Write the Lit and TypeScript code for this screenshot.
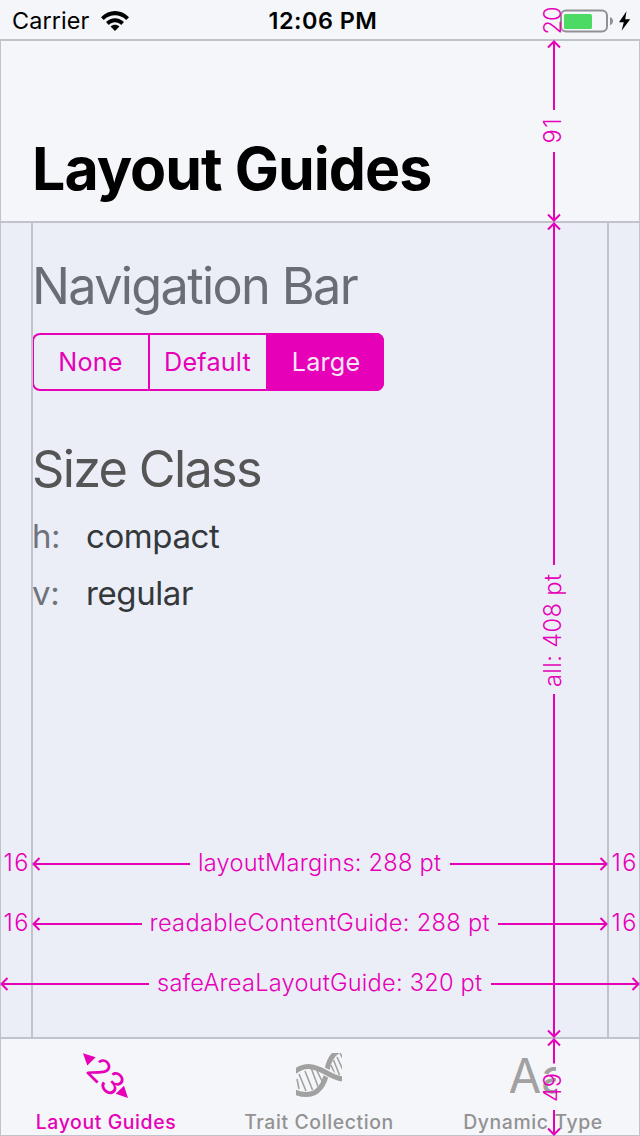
import { LitElement, html, svg, css } from "lit";
import { customElement, property } from "lit/decorators.js";

const ACCENT = "#e600b8";

type Tick = { x: number; y: number; len: number; text: string; vertical?: boolean };

@customElement("status-bar")
class StatusBar extends LitElement {
  static styles = css`
    :host { display: grid; grid-template-columns: 1fr auto 1fr; height: 41px; line-height: 41px; font-size: 23.4px; color: #000; }
    .left { display: flex; align-items: center; padding-left: 12px; gap: 12px; letter-spacing: 0.1px; }
    .time { font-weight: 600; letter-spacing: 0.5px; padding-left: 6px; }
    .right { display: flex; justify-content: flex-end; align-items: center; padding-right: 8px; }
    svg { display: block; }
  `;
  render() {
    return html`
      <div class="left">
        <span>Carrier</span>
        <svg width="28" height="20" viewBox="0 0 28 20">
          <path d="M0 6.2C8-2 20-2 28 6.2L25.2 9C18.8 2.8 9.2 2.8 2.8 9Z" />
          <path d="M5 11.1C10 6 18 6 23 11.1L20.2 13.9C16.6 10.4 11.4 10.4 7.8 13.9Z" />
          <path d="M9.6 15.6C12 13.2 16 13.2 18.4 15.6L14 20Z" />
        </svg>
      </div>
      <div class="time">12:06 PM</div>
      <div class="right">
        <svg width="72" height="24" viewBox="0 0 72 24">
          <rect x="1" y="1.5" width="46" height="21" rx="5" fill="none" stroke="#919195" stroke-width="2" />
          <rect x="4" y="5" width="28" height="15" rx="1.5" fill="#4cd964" />
          <path d="M50 8C54 9.2 54 15 50 16.200Z" fill="#919195" />
          <path d="M66.500 2.300 59 13.300H63.800L61.600 21.700 70.200 10.300H65.200Z" />
        </svg>
      </div>
    `;
  }
}

@customElement("segmented-control")
class SegmentedControl extends LitElement {
  @property({ attribute: false }) items: string[] = [];
  @property() selected = "";
  static styles = css`
    :host { display: grid; grid-template-columns: 117px 117px 118px; box-sizing: border-box; width: 352px; height: 58px; border-radius: 8px; overflow: hidden; box-shadow: inset 0 0 0 2px #e600b8; }
    .seg { display: flex; align-items: center; justify-content: center; color: #e600b8; font-size: 25.2px; letter-spacing: 0.2px; box-sizing: border-box; }
    .seg + .seg { box-shadow: -1px 0 0 #e600b8, inset 1px 0 0 #e600b8; }
    .seg.on { background: #e600b8; color: #f4e8f8; padding-left: 2px; box-shadow: none; }
  `;
  render() {
    return this.items.map((t) => html`<div class="seg ${t === this.selected ? "on" : ""}">${t}</div>`);
  }
}

@customElement("guide-overlay")
class GuideOverlay extends LitElement {
  static styles = css`
    :host { display: block; }
    svg { display: block; }
    .frame { stroke: #c1c3cc; stroke-width: 2; fill: none; }
    .arrow { stroke: #e600b8; stroke-width: 2; fill: none; }
    .label { fill: #e600b8; font-size: 23.6px; font-weight: 300; }
  `;
  private hArrow(y: number, x1: number, a: number, b: number, x2: number) {
    return svg`<path class="arrow" d="M${x1 + 1} ${y}H${a}M${b} ${y}H${x2 - 1}
      M${x1 + 7} ${y - 6}L${x1 + 1} ${y}L${x1 + 7} ${y + 6}M${x2 - 7} ${y - 6}L${x2 - 1} ${y}L${x2 - 7} ${y + 6}" />`;
  }
  private vArrow(y1: number, a: number, b: number, y2: number) {
    const x = 554;
    return svg`<path class="arrow" d="M${x} ${y1 + 1}V${a}M${x} ${b}V${y2 - 1}
      M${x - 6} ${y1 + 7}L${x} ${y1 + 1}L${x + 6} ${y1 + 7}M${x - 6} ${y2 - 7}L${x} ${y2 - 1}L${x + 6} ${y2 - 7}" />`;
  }
  private label(t: Tick) {
    return svg`<text class="label" textLength=${t.len} transform="translate(${t.x} ${t.y})${t.vertical ? " rotate(-90)" : ""}">${t.text}</text>`;
  }
  render() {
    const labels: Tick[] = [
      { x: 198, y: 871.3, len: 243, text: "layoutMargins: 288 pt" },
      { x: 149.5, y: 931.3, len: 340, text: "readableContentGuide: 288 pt" },
      { x: 157, y: 991.3, len: 325, text: "safeAreaLayoutGuide: 320 pt" },
      { x: 3.5, y: 871.3, len: 25, text: "16" },
      { x: 611.5, y: 871.3, len: 25, text: "16" },
      { x: 3.5, y: 931.3, len: 25, text: "16" },
      { x: 611.5, y: 931.3, len: 25, text: "16" },
      { x: 560.7, y: 34.5, len: 28, text: "20", vertical: true },
      { x: 560.7, y: 143.5, len: 25, text: "91", vertical: true },
      { x: 560.7, y: 687, len: 113, text: "all: 408 pt", vertical: true },
      { x: 560.7, y: 1102, len: 29, text: "49", vertical: true },
    ];
    return html`
      <svg width="640" height="1136" viewBox="0 0 640 1136">
        <path class="frame" d="M0 40H640M0 222H640M0 1038H640M0 1136H640M0 40V1136M640 40V1136M32 222V1038M608 222V1038" />
        ${this.hArrow(864, 32.5, 190, 450, 607.5)}
        ${this.hArrow(924, 32.5, 142, 498, 607.5)}
        ${this.hArrow(984, 0.5, 149, 491, 639.5)}
        ${this.vArrow(40.5, 110, 152, 221.5)}
        ${this.vArrow(222.5, 565, 694, 1037.5)}
        ${this.vArrow(1038.5, 1063.5, 1110, 1135.5)}
        ${labels.map((l) => this.label(l))}
      </svg>
    `;
  }
}

@customElement("tab-bar")
class TabBar extends LitElement {
  static styles = css`
    :host { display: grid; grid-template-columns: 212px 214px 214px; height: 98px; background: #f5f6f9; box-sizing: border-box; padding-top: 14px; }
    .tab { display: flex; flex-direction: column; align-items: center; color: #929292; font-size: 19.4px; line-height: 24px; font-weight: 500; letter-spacing: 0.62px; gap: 12px; white-space: nowrap; }
    .active { color: #e600b8; }
    .tab svg { display: block; overflow: hidden; }
    .tab.active svg { overflow: visible; }
    .glyph { font-size: 32px; font-weight: 400; letter-spacing: 0; }
    .aa { font-size: 47.5px; font-weight: 400; letter-spacing: 0; }
    .strand { fill: none; stroke: #a1a1a1; stroke-width: 5; }
    .gap { fill: none; stroke: #f5f6f9; stroke-width: 7.5; }
    .rung { fill: none; stroke: #a1a1a1; stroke-width: 1.6; }
  `;
  render() {
    return html`
      <div class="tab active">
        <svg width="46" height="46" viewBox="83 1052 46 46" fill=${ACCENT}>
          <path d="M83 1053.300 95.700 1057.300 87.300 1065.500ZM128 1098 115.700 1093.700 124 1085.700Z" />
          <text class="glyph" textLength="38" transform="translate(84.600 1071.300) rotate(45)">23</text>
        </svg>
        <span>Layout Guides</span>
      </div>
      <div class="tab">
        <svg width="46" height="46" viewBox="0 -1 46 46">
          <path class="rung" d="M1 26 3 36M3 21 10 38M9 18 16.500 37M15.500 16 22 33.500M21 18 27 30M35 12 38.500 20M37.500 7 43.500 22M41 4 47 17M44 0 48 8" />
          <path class="strand" d="M45-4C36 1 32 8 31 18C29 31 22 41.500 11 41.500C6 41.500 3 41-1 39" />
          <path class="gap" d="M27 18 37 22.500" />
          <path class="strand" d="M-1 18.500C10 10.500 19 13.500 29 19C36 23 41 25.500 47 26" />
          <rect x="0" y="-1" width="46" height="1" fill="#f5f6f9" />
        </svg>
        <span>Trait Collection</span>
      </div>
      <div class="tab">
        <svg width="46" height="46" viewBox="0 0 46 46" fill="#a1a1a1">
          <text class="aa" x="-1.500" y="40.700">Aa</text>
        </svg>
        <span>Dynamic Type</span>
      </div>
    `;
  }
}

@customElement("app-root")
class AppRoot extends LitElement {
  static styles = css`
    :host { display: block; position: relative; width: 640px; height: 1136px; overflow: hidden; font-family: Inter, "Liberation Sans", sans-serif; background: #ebeef7; }
    .page { display: flex; flex-direction: column; height: 100%; }
    .bar { background: #f5f6f9; height: 222px; box-sizing: border-box; }
    .title { margin: 0; padding: 92.500px 0 0 32px; font-size: 59px; line-height: 70px; font-weight: 700; letter-spacing: -0.98px; color: #000; }
    .content { flex: 1; padding: 34px 32px 0; }
    .heading { margin: 0; font-size: 50.400px; line-height: 60px; font-weight: 400; letter-spacing: -1.67px; color: #6a6d75; }
    .dark { color: #555; margin-top: 48px; }
    .control { margin-top: 17px; }
    .row { display: grid; grid-template-columns: 54px 1fr; margin-top: 17px; font-size: 33px; line-height: 40px; letter-spacing: -0.4px; }
    .key { color: #70737b; }
    .val { color: #34383b; }
    .overlay { position: absolute; left: 0; top: 0; }
  `;
  render() {
    return html`
      <div class="page">
        <header class="bar">
          <status-bar></status-bar>
          <h1 class="title">Layout Guides</h1>
        </header>
        <main class="content">
          <h2 class="heading">Navigation Bar</h2>
          <segmented-control class="control" .items=${["None", "Default", "Large"]} selected="Large"></segmented-control>
          <h2 class="heading dark">Size Class</h2>
          <div class="row"><span class="key">h:</span><span class="val">compact</span></div>
          <div class="row"><span class="key">v:</span><span class="val">regular</span></div>
        </main>
        <tab-bar></tab-bar>
      </div>
      <guide-overlay class="overlay"></guide-overlay>
    `;
  }
}
